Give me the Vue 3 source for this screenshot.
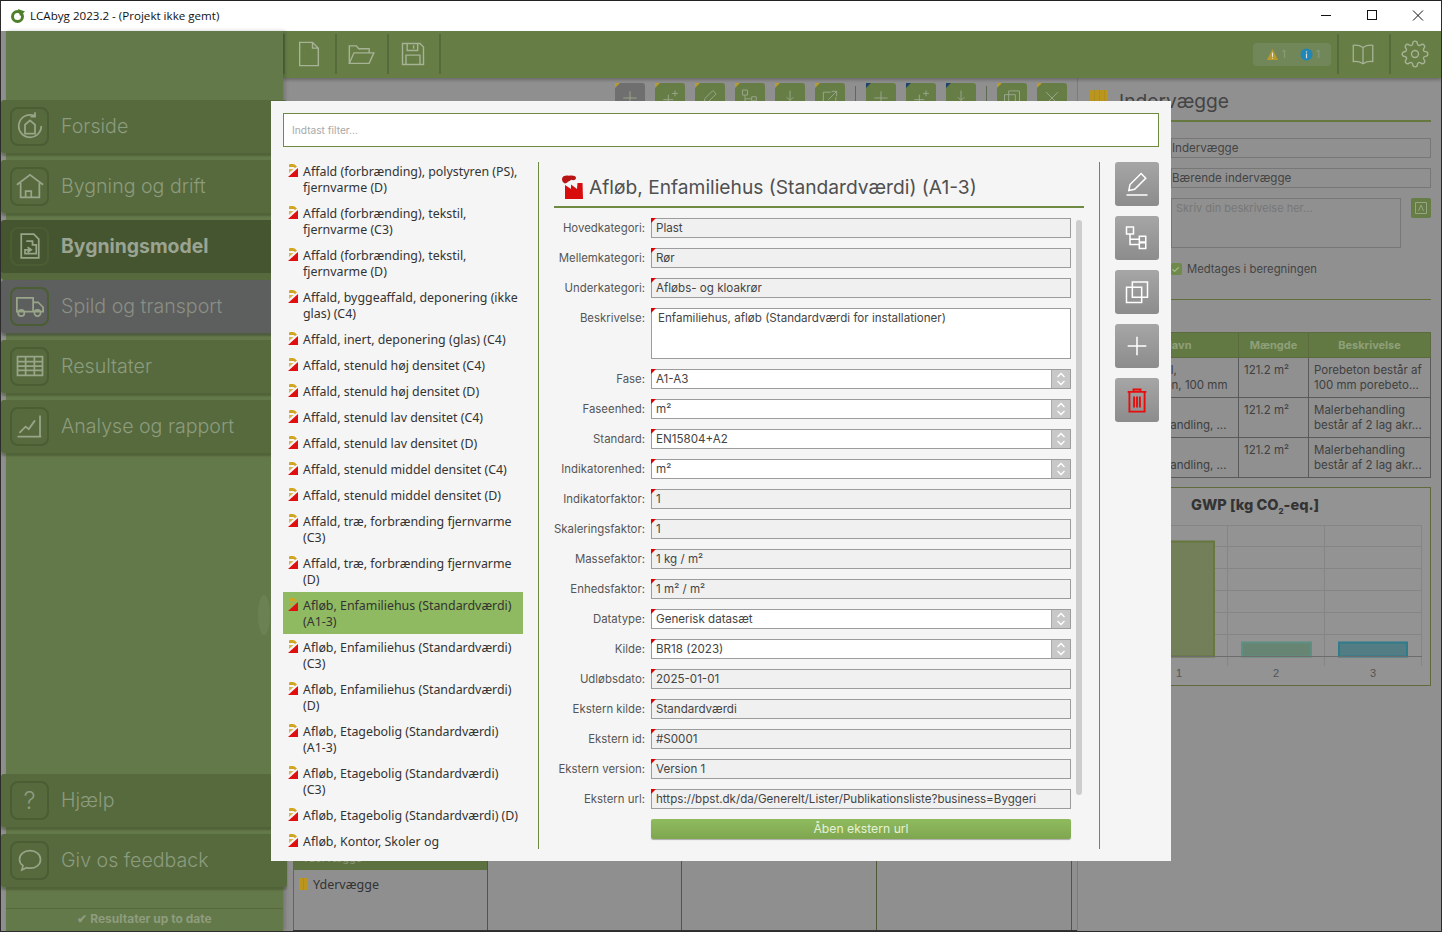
<template>
  <div class="window">
    <header class="titlebar">
      <svg class="logo" viewBox="0 0 16 16" width="16" height="16">
        <circle cx="7.5" cy="8.500" r="5" fill="none" stroke="#4f7f2d" stroke-width="3" />
        <path d="M8 1l7 2.500L10 8z" fill="#4f7f2d" />
        <path d="M7.500 6.500a2 2 0 1 0 2 2" fill="none" stroke="#fff" stroke-width=".8" />
      </svg>
      <span class="app-title">LCAbyg 2023.2 - (Projekt ikke gemt)</span>
      <div class="win-controls">
        <svg viewBox="0 0 46 30" width="46" height="30"><path d="M18 14.500h10" stroke="#111" fill="none" /></svg>
        <svg viewBox="0 0 46 30" width="46" height="30"><rect x="18.500" y="9.500" width="9" height="9" stroke="#111" fill="none" /></svg>
        <svg viewBox="0 0 46 30" width="46" height="30"><path d="M18 9.500l10 10M28 9.500l-10 10" stroke="#111" fill="none" /></svg>
      </div>
    </header>

    <div class="shell">
      <aside class="sidebar">
        <nav class="nav">
          <a v-for="item in navTop" :key="item.label" class="nav-item" :class="item.cls">
            <span class="nav-icon">
              <svg viewBox="0 0 24 24" width="30" height="30"><path :d="icons[item.icon]" /></svg>
            </span>
            {{ item.label }}
          </a>
        </nav>
        <div class="grip"></div>
        <nav class="nav nav-bottom">
          <a class="nav-item">
            <span class="nav-icon nav-q">?</span>
            Hjælp
          </a>
          <a class="nav-item">
            <span class="nav-icon">
              <svg viewBox="0 0 24 24" width="28" height="28"><path :d="icons.bubble" /></svg>
            </span>
            Giv os feedback
          </a>
        </nav>
        <div class="status">✔ Resultater up to date</div>
      </aside>

      <main class="main">
        <div class="topbar">
          <button v-for="t in ['file', 'folder', 'save']" :key="t" class="top-btn">
            <svg viewBox="0 0 24 24" width="28" height="28"><path :d="icons[t]" /></svg>
          </button>
          <div class="notices">
            <svg viewBox="0 0 14 14" width="13" height="13"><path d="M7 1l6 12H1z" fill="#b89a2c" /><path d="M7 5v4.500M7 10.500v1" stroke="#eee" /></svg>
            <span>1</span>
            <svg class="info" viewBox="0 0 14 14" width="13" height="13"><circle cx="7" cy="7" r="6.500" fill="#1f86b5" /><path d="M7 6v5M7 3.500v1.400" stroke="#ddd" stroke-width="1.300" /></svg>
            <span>1</span>
          </div>
          <button class="top-btn top-sep">
            <svg viewBox="0 0 24 24" width="26" height="26"><path :d="icons.book" /></svg>
          </button>
          <button class="top-btn top-sep">
            <svg viewBox="0 0 24 24" width="28" height="28"><path :d="icons.gear" /></svg>
          </button>
        </div>

        <div class="work">
          <section class="center">
            <div class="toolbar">
              <template v-for="(group, g) in toolGroups" :key="g">
                <span v-if="g > 0" class="tool-sep"></span>
                <button v-for="(t, i) in group.items" :key="i" class="tool" :class="[group.cls, { gray: g === 0 && i === 0 }]">
                  <svg viewBox="0 0 24 24" width="20" height="20"><path :d="icons[t]" /></svg>
                </button>
              </template>
            </div>
            <div class="board">
              <div class="col first">
                <div class="col-head">Ydervægge</div>
                <div class="col-row"><span class="wall-icon"></span>Ydervægge</div>
              </div>
              <div class="col"></div>
              <div class="col"></div>
              <div class="col"></div>
            </div>
          </section>

          <section class="panel">
            <div class="panel-title"><span class="wall-icon big"></span>Indervægge</div>
            <div class="p-input">Indervægge</div>
            <div class="p-input">Bærende indervægge</div>
            <div class="p-desc">
              <div class="p-area">Skriv din beskrivelse her...</div>
              <span class="p-expand"><svg viewBox="0 0 14 14" width="14" height="14"><path d="M1.500 1.500h11v11h-11zM4.500 10L7 4l2.500 6" fill="none" stroke="#98a584" /></svg></span>
            </div>
            <div class="p-check"><span class="check">✓</span>Medtages i beregningen</div>
            <div class="p-line"></div>
            <table class="p-table">
              <colgroup><col class="c1" /><col class="c2" /><col class="c3" /></colgroup>
              <thead><tr><th class="name-head">Navn</th><th>Mængde</th><th>Beskrivelse</th></tr></thead>
              <tbody>
                <tr v-for="r in tableRows" :key="r.id">
                  <td class="name-cell">{{ r.name[0] }}<br />{{ r.name[1] }}</td>
                  <td>121.2 m²</td>
                  <td>{{ r.desc[0] }}<br />{{ r.desc[1] }}</td>
                </tr>
              </tbody>
            </table>
            <div class="chart">
              <div class="chart-title">GWP [kg CO<sub>2</sub>-eq.]</div>
              <svg class="chart-svg" viewBox="0 0 340 160" width="340" height="160">
                <g stroke="#858585" fill="none">
                  <path v-for="y in [0.5, 21.5, 43.5, 65.5, 87.5, 109.5]" :key="y" :d="`M40 ${y}H331`" />
                  <path v-for="x in [136.5, 233.5, 330.5]" :key="x" :d="`M${x} 0V141`" />
                </g>
                <rect x="40" y="16.500" width="83" height="115" fill="#727f58" stroke="#67773f" stroke-width="2" />
                <rect x="151" y="117.500" width="69" height="14" fill="#688472" stroke="#5c9082" stroke-width="2" />
                <rect x="248" y="117.500" width="68" height="14" fill="#527d84" stroke="#2f7c8b" stroke-width="2" />
                <path d="M40 131.500H331" stroke="#6d6d6d" />
                <text x="85" y="152" class="tick">1</text>
                <text x="182" y="152" class="tick">2</text>
                <text x="279" y="152" class="tick">3</text>
              </svg>
            </div>
          </section>
        </div>
      </main>
    </div>

    <div class="modal">
      <input class="filter" type="text" placeholder="Indtast filter..." />
      <div class="modal-body">
        <ul class="list">
          <li v-for="(name, i) in products" :key="i" class="list-item" :class="{ selected: i === selected }">
            <svg class="prod-icon" viewBox="0 0 10 13" width="10" height="13">
              <path d="M0 13L10 4v9z" fill="#e01010" />
              <path d="M1 0.500C3 -.2 6 0 7.500 1.200L9 2.500 7 4 5.500 3H1z" fill="#d2a520" />
              <path d="M1 5h4.500L1 9z" fill="#d2a520" opacity=".8" />
            </svg>
            <span class="item-text">{{ name }}</span>
          </li>
        </ul>

        <div class="vline"></div>

        <div class="detail">
          <h2 class="detail-title">
            <svg viewBox="0 0 21 24" width="21" height="24">
              <path d="M3 24V10l6 4V9.500l6 4.500 .5-6h5L21 24z" fill="#d80c0c" />
              <path d="M0 4C0 1 4 0 7 .8c3-.8 7 0 7 2 0 2-2 3-5 2-1 2-3 1-4 3L3 8.500C1 8 0 6 0 4z" fill="#b81414" />
            </svg>
            Afløb, Enfamiliehus (Standardværdi) (A1-3)
          </h2>
          <div class="form-wrap">
            <div class="form">
              <div v-for="f in fields" :key="f.label" class="form-row">
                <label class="form-label">{{ f.label }}:</label>
                <div class="field" :class="{ white: f.select || f.area, area: f.area }">
                  <span class="field-text">{{ f.value }}</span>
                  <span v-if="f.select" class="stepper">
                    <svg viewBox="0 0 18 18" width="18" height="18"><path d="M5.500 7L9 3.500 12.500 7M5.500 11L9 14.500l3.500-3.500" fill="none" stroke="#fff" stroke-width="1.300" /></svg>
                  </span>
                </div>
              </div>
              <div class="form-row">
                <span class="form-label"></span>
                <button class="open-url">Åben ekstern url</button>
              </div>
            </div>
            <div class="scrollbar"></div>
          </div>
        </div>

        <div class="vline"></div>

        <div class="actions">
          <button v-for="a in actions" :key="a" class="action" :class="{ danger: a === 'trash' }">
            <svg viewBox="0 0 24 24" width="28" height="28"><path :d="icons[a]" /></svg>
          </button>
        </div>
      </div>
    </div>
  </div>
</template>

<script setup>
const selected = 13

const icons = {
  home: 'M21 12a9 9 0 1 1-5-8M16 1v3.500h-3.600M8 18v-7l4-3.500 4 3.500v7z',
  house: 'M1.500 11L12 3l10.500 8M4.500 9.500V21h15V9.500M8.500 21v-5h4.500v5',
  doc: 'M5 2.500h10l4 4v15H5zM9 8h5v3h3v7H8v-3h5M10 13l3 2-3 2',
  truck: 'M1.500 5.500h13v11h-13zM14.500 9h4l4 4v3.500h-8M7.500 17.500a2.500 2.500 0 1 1-5 0 2.500 2.500 0 0 1 5 0zM20.500 17.500a2.500 2.500 0 1 1-5 0 2.500 2.500 0 0 1 5 0z',
  table: 'M2 4.500h20v15H2zM2 8.500h20M2 12h20M2 15.500h20M8.500 4.500v15M15.500 4.500v15',
  chart: 'M2 20.500h19M20 3.500v17M3.500 17.500l5-5 2.500 2 5-7',
  bubble: 'M12 4c5 0 9 3 9 7.500S17 19 12 19c-1 0-2 0-3-.4L5 20.500l1-3.700C4 15.400 3 13.500 3 11.500 3 7 7 4 12 4z',
  file: 'M4 2h11l5 5v15H4zM15 2v5h5',
  folder: 'M2 20V5h6l2 2.500h9V11M2 20l4-9h17l-4 9z',
  save: 'M3 3h15l3 3v15H3zM7 3v6h9V3M12.500 4.500v3M6 21v-8h12v8',
  book: 'M12 6C9 4 6 3.500 3 4v15c3-.5 6 0 9 2 3-2 6-2.500 9-2V4c-3-.500-6 0-9 2zM12 6v15',
  gear: 'M12 15a3 3 0 1 0 0-6 3 3 0 0 0 0 6zM19.400 15a1.650 1.650 0 0 0 .33 1.820l.06.06a2 2 0 0 1 0 2.830 2 2 0 0 1-2.830 0l-.06-.06a1.650 1.650 0 0 0-1.820-.33 1.650 1.650 0 0 0-1 1.510V21a2 2 0 0 1-2 2 2 2 0 0 1-2-2v-.09A1.650 1.650 0 0 0 9 19.400a1.650 1.650 0 0 0-1.820.33l-.06.06a2 2 0 0 1-2.830 0 2 2 0 0 1 0-2.830l.06-.06a1.650 1.650 0 0 0 .33-1.820 1.650 1.650 0 0 0-1.510-1H3a2 2 0 0 1-2-2 2 2 0 0 1 2-2h.09A1.650 1.650 0 0 0 4.600 9a1.650 1.650 0 0 0-.33-1.820l-.06-.06a2 2 0 0 1 0-2.830 2 2 0 0 1 2.830 0l.06.06a1.650 1.650 0 0 0 1.820.33H9a1.650 1.650 0 0 0 1-1.510V3a2 2 0 0 1 2-2 2 2 0 0 1 2 2v.09a1.650 1.650 0 0 0 1 1.510 1.650 1.650 0 0 0 1.820-.33l.06-.06a2 2 0 0 1 2.830 0 2 2 0 0 1 0 2.830l-.06.06a1.650 1.650 0 0 0-.33 1.820V9a1.650 1.650 0 0 0 1.510 1H21a2 2 0 0 1 2 2 2 2 0 0 1-2 2h-.09a1.650 1.650 0 0 0-1.510 1z',
  plus: 'M12 4v16M4 12h16',
  plusplus: 'M10 8v12M4 14h12M18 3v7M14.500 6.500h7',
  pencil: 'M5 17.500l1-5L15.500 3l4 4L10 16.500zM3 21.500h18',
  tree: 'M3 2.500h6v6H3zM6 8.500v9h8M6 13h8M14 10.500h5.500v5H14zM14 16h5.500v5H14z',
  down: 'M12 3v12M8 11l4 4 4-4M3 19v2h18v-2',
  out: 'M13 5H4v15h15v-9M10 14L20 4M14 4h6v6',
  copy: 'M3 8h13v13H3zM8 3.500h13v13H8z',
  cross: 'M5 5l14 14M19 5L5 19',
  trash: 'M4 5h16M9 5V3h6v2M5.500 5h13v17h-13zM9.500 9v9.500M12 9v9.500M14.500 9v9.500'
}

const navTop = [
  { label: 'Forside', icon: 'home' },
  { label: 'Bygning og drift', icon: 'house' },
  { label: 'Bygningsmodel', icon: 'doc', cls: 'active' },
  { label: 'Spild og transport', icon: 'truck', cls: 'muted' },
  { label: 'Resultater', icon: 'table' },
  { label: 'Analyse og rapport', icon: 'chart' }
]

const toolGroups = [
  { cls: 'corner-y', items: ['plus', 'plusplus', 'pencil', 'tree', 'down', 'out'] },
  { cls: 'corner-b', items: ['plus', 'plusplus', 'down'] },
  { cls: 'corner-y', items: ['copy', 'cross'] }
]

const tableRows = [
  { id: 1, name: ['Bærende panel,', 'Væg, porebeton, 100 mm'], desc: ['Porebeton består af', '100 mm porebeto...'] },
  { id: 2, name: ['Overfladelag,', 'Væg malerbehandling, ...'], desc: ['Malerbehandling', 'består af 2 lag akr...'] },
  { id: 3, name: ['Overfladelag,', 'Væg malerbehandling, ...'], desc: ['Malerbehandling', 'består af 2 lag akr...'] }
]

const products = [
  'Affald (forbrænding), polystyren (PS), fjernvarme (D)',
  'Affald (forbrænding), tekstil, fjernvarme (C3)',
  'Affald (forbrænding), tekstil, fjernvarme (D)',
  'Affald, byggeaffald, deponering (ikke glas) (C4)',
  'Affald, inert, deponering (glas) (C4)',
  'Affald, stenuld høj densitet (C4)',
  'Affald, stenuld høj densitet (D)',
  'Affald, stenuld lav densitet (C4)',
  'Affald, stenuld lav densitet (D)',
  'Affald, stenuld middel densitet (C4)',
  'Affald, stenuld middel densitet (D)',
  'Affald, træ, forbrænding fjernvarme (C3)',
  'Affald, træ, forbrænding fjernvarme (D)',
  'Afløb, Enfamiliehus (Standardværdi) (A1-3)',
  'Afløb, Enfamiliehus (Standardværdi) (C3)',
  'Afløb, Enfamiliehus (Standardværdi) (D)',
  'Afløb, Etagebolig (Standardværdi) (A1-3)',
  'Afløb, Etagebolig (Standardværdi) (C3)',
  'Afløb, Etagebolig (Standardværdi) (D)',
  'Afløb, Kontor, Skoler og Daginstitutioner'
]

const fields = [
  { label: 'Hovedkategori', value: 'Plast' },
  { label: 'Mellemkategori', value: 'Rør' },
  { label: 'Underkategori', value: 'Afløbs- og kloakrør' },
  { label: 'Beskrivelse', value: 'Enfamiliehus, afløb (Standardværdi for installationer)', area: true },
  { label: 'Fase', value: 'A1-A3', select: true },
  { label: 'Faseenhed', value: 'm²', select: true },
  { label: 'Standard', value: 'EN15804+A2', select: true },
  { label: 'Indikatorenhed', value: 'm²', select: true },
  { label: 'Indikatorfaktor', value: '1' },
  { label: 'Skaleringsfaktor', value: '1' },
  { label: 'Massefaktor', value: '1 kg / m²' },
  { label: 'Enhedsfaktor', value: '1 m² / m²' },
  { label: 'Datatype', value: 'Generisk datasæt', select: true },
  { label: 'Kilde', value: 'BR18 (2023)', select: true },
  { label: 'Udløbsdato', value: '2025-01-01' },
  { label: 'Ekstern kilde', value: 'Standardværdi' },
  { label: 'Ekstern id', value: '#S0001' },
  { label: 'Ekstern version', value: 'Version 1' },
  { label: 'Ekstern url', value: 'https://bpst.dk/da/Generelt/Lister/Publikationsliste?business=Byggeri' }
]

const actions = ['pencil', 'tree', 'copy', 'plus', 'trash']
</script>

<style>
html,
body {
  margin: 0;
  overflow: hidden;
}
</style>

<style scoped>
.window {
  position: relative;
  display: flex;
  flex-direction: column;
  width: 1442px;
  height: 932px;
  box-sizing: border-box;
  border: 1px solid #2c2c2c;
  border-top-color: #222;
  background: #8f8f8f;
  overflow: hidden;
  font-family: Inter, "Noto Sans", sans-serif;
  color: #444;
}

.titlebar {
  display: flex;
  align-items: center;
  height: 30px;
  flex: none;
  background: #fff;
  padding-left: 9px;
}

.logo {
  margin-right: 4px;
}

.app-title {
  padding-bottom: 1px;
  font-family: "Open Sans", "Noto Sans", sans-serif;
  font-size: 11.6px;
  color: #111;
}

.win-controls {
  display: flex;
  margin-left: auto;
}

.shell {
  display: flex;
  flex: 1;
  min-height: 0;
}

.sidebar {
  position: relative;
  z-index: 1;
  display: flex;
  flex-direction: column;
  flex: none;
  width: 277px;
  margin-left: 5px;
  padding-top: 69px;
  box-sizing: border-box;
  background: #64794a;
  box-shadow: 2px 0 4px rgba(0, 0, 0, 0.2);
}

.nav {
  display: flex;
  flex-direction: column;
  gap: 7px;
  margin: 0 -4px 0 -5px;
}

.nav-bottom {
  margin-top: auto;
}

.nav-item {
  display: flex;
  align-items: center;
  gap: 12px;
  height: 53px;
  padding: 0 0 1px 9px;
  box-sizing: border-box;
  background: #566a3d;
  border-radius: 3px;
  box-shadow: 0 3px 2px rgba(50, 64, 30, 0.4);
  font-size: 19.6px;
  font-weight: 300;
  color: #8d9b7e;
}

.nav-item.active {
  background: #445530;
  font-weight: 700;
  color: #9ba392;
  font-size: 19.4px;
  box-shadow: 0 7px 0 #566a3d;
}

.nav-item.muted {
  background: #5d5e5e;
  box-shadow: 0 3px 2px rgba(50, 50, 50, 0.4);
  color: #8a8f84;
}

.nav-icon {
  display: flex;
  align-items: center;
  justify-content: center;
  width: 35px;
  height: 35px;
  flex: none;
  border: 2px solid #4b5d33;
  border-radius: 8px;
}

.nav-icon svg {
  fill: none;
  stroke: #98a588;
  stroke-width: 1.4;
}

.nav-q {
  font-size: 24px;
  font-weight: 300;
}

.grip {
  position: absolute;
  right: 13px;
  top: 564px;
  width: 12px;
  height: 40px;
  border-radius: 50%;
  background: #6c8153;
}

.status {
  margin: 21px 0 0;
  height: 23px;
  line-height: 20px;
  border-top: 1px solid #566a3d;
  box-sizing: border-box;
  text-align: center;
  font-size: 12px;
  font-weight: 700;
  color: #8e9c7e;
}

.main {
  display: flex;
  flex-direction: column;
  flex: 1;
  min-width: 0;
}

.topbar {
  position: relative;
  display: flex;
  align-items: stretch;
  flex: none;
  height: 47px;
  padding: 3px 0 4px;
  box-sizing: border-box;
  background: #667d46;
  box-shadow: 0 2px 3px rgba(0, 0, 0, 0.25);
}

.top-btn {
  display: flex;
  align-items: center;
  justify-content: center;
  width: 52px;
  padding: 0 2px 0 0;
  background: none;
  border: 0;
  border-left: 2px solid #566a3c;
}

.top-btn:nth-child(3) {
  width: 54px;
  border-right: 2px solid #566a3c;
}

.top-btn svg {
  fill: none;
  stroke: #a6b394;
  stroke-width: 1.2;
}

.notices {
  display: flex;
  align-items: center;
  gap: 3px;
  align-self: center;
  height: 23px;
  margin: 0 6px 0 auto;
  padding: 0 11px 0 13px;
  border-radius: 4px;
  background: #71875a;
  font-size: 10px;
  color: #8fa07c;
}

.notices .info {
  margin-left: 11px;
}

.work {
  display: flex;
  flex: 1;
  min-height: 0;
}

.center {
  display: flex;
  flex-direction: column;
  flex: none;
  width: 794px;
}

.toolbar {
  display: flex;
  gap: 10px;
  padding: 5px 0 0 332px;
}

.tool {
  position: relative;
  display: flex;
  align-items: center;
  justify-content: center;
  width: 30px;
  height: 30px;
  padding: 0;
  border: 0;
  border-radius: 3px;
  background: #667d46;
}

.tool.gray {
  background: #6f6f6f;
}

.tool::before {
  content: "";
  position: absolute;
  top: 0;
  left: 0;
  border-style: solid;
  border-width: 5px 5px 0 0;
  border-color: #b99a2e transparent transparent transparent;
}

.corner-b::before {
  border-color: #1f4468 transparent transparent transparent;
}

.tool svg {
  fill: none;
  stroke: #98a58a;
  stroke-width: 1.2;
}

.tool-sep {
  width: 1px;
  height: 26px;
  margin-top: 3px;
  background: #5e6b50;
}

.board {
  display: grid;
  grid-template-columns: 195px 194px 195px 195px;
  height: 90px;
  margin: auto 0 0 10px;
  border-bottom: 1px solid #333;
}

.col {
  border-right: 1px solid #4d5a38;
}

.col.first {
  border-left: 1px solid #5d6f3d;
}

.col-head {
  height: 30px;
  padding: 8px 0 0 8px;
  box-sizing: border-box;
  line-height: 20px;
  background: #5d7140;
  font-size: 11px;
  color: #8d9a7e;
}

.col-row {
  display: flex;
  align-items: center;
  gap: 5px;
  height: 28px;
  padding-left: 5px;
  font-family: "Noto Sans", sans-serif;
  font-size: 12.5px;
  color: #333;
}

.wall-icon {
  display: inline-block;
  width: 9px;
  height: 12px;
  background: repeating-linear-gradient(90deg, #bb961f 0 4px, #b08c1c 4px 5px);
  border-radius: 1px;
}

.wall-icon.big {
  width: 18px;
  height: 18px;
  margin: -5px 11px 0 0;
}

.panel {
  flex: 1;
  padding: 0 11px 0 12px;
  border-left: 1px solid #7c7c7c;
  background: #909090;
  font-size: 11.6px;
}

.panel-title {
  display: flex;
  align-items: center;
  height: 44px;
  padding-top: 4px;
  box-sizing: border-box;
  border-bottom: 2px solid #66773f;
  font-size: 19.200px;
  color: #444;
}

.p-input {
  width: 260px;
  height: 20px;
  margin: 16px 0 -6px auto;
  box-sizing: border-box;
  border: 1px solid #777;
  line-height: 18px;
}

.p-desc {
  display: flex;
  gap: 10px;
  justify-content: flex-end;
  margin-top: 16px;
}

.p-area {
  width: 230px;
  height: 50px;
  padding: 2px 4px;
  box-sizing: border-box;
  border: 1px solid #777;
  font-size: 11px;
  color: #777;
}

.p-expand {
  display: flex;
  align-items: center;
  justify-content: center;
  width: 20px;
  height: 20px;
  border-radius: 2px;
  background: #667d46;
}

.p-check {
  display: flex;
  align-items: center;
  gap: 5px;
  height: 12px;
  margin: 15px 0 0 81px;
  font-size: 11.300px;
  color: #444;
}

.check {
  width: 11px;
  height: 12px;
  line-height: 12px;
  border-radius: 2px;
  background: #6f8a4a;
  font-size: 10px;
  color: #b7c5a4;
}

.p-line {
  height: 1px;
  margin: 24px 0 32px;
  background: #5f6f3a;
}

.p-table {
  width: 341px;
  border-collapse: collapse;
  table-layout: fixed;
  font-size: 11.500px;
  color: #3f3f3f;
}

.c1 {
  width: 148px;
}

.c2 {
  width: 70px;
}

.p-table th {
  height: 24px;
  padding: 0;
  border: 1px solid #5c6b3f;
  background: #627944;
  font-size: 11px;
  color: #8fa079;
}

.p-table th.name-head {
  padding-left: 26px;
}

.p-table td {
  height: 34px;
  padding: 5px 0 0 5px;
  border: 1px solid #5a5a5a;
  vertical-align: top;
  line-height: 15px;
  white-space: nowrap;
  overflow: hidden;
}

.p-table td.name-cell {
  padding-left: 0;
}

.chart {
  width: 341px;
  height: 199px;
  margin-top: 9px;
  box-sizing: border-box;
  border: 1px solid #5f6b3c;
  background: #939393;
}

.chart-title {
  height: 37px;
  padding: 8px 0 0 100px;
  box-sizing: border-box;
  font-size: 14.500px;
  font-weight: 800;
  color: #333;
}

.chart-title sub {
  font-size: 8px;
  line-height: 0;
}

.chart-svg {
  display: block;
}

.tick {
  font-family: "Liberation Sans", sans-serif;
  font-size: 11px;
  fill: #555;
}

.modal {
  position: absolute;
  z-index: 2;
  left: 270px;
  top: 100px;
  width: 900px;
  height: 760px;
  padding: 12px;
  box-sizing: border-box;
  background: #f5f5f5;
}

.filter {
  display: block;
  width: 100%;
  height: 34px;
  padding: 0 8px;
  box-sizing: border-box;
  border: 1px solid #6f8a42;
  border-radius: 0;
  outline: none;
  background: #fff;
  font-family: Inter, sans-serif;
  font-size: 10.200px;
}

.filter::placeholder {
  color: #a8a8a8;
}

.modal-body {
  display: flex;
  height: 691px;
  margin-top: 11px;
}

.list {
  flex: none;
  width: 240px;
  margin: 0 15px 0 0;
  padding: 0;
  list-style: none;
  overflow: hidden;
  font-family: "Noto Sans", sans-serif;
  font-size: 12.400px;
  line-height: 16px;
  color: #333;
}

.list-item {
  display: flex;
  gap: 5px;
  padding: 5px 3px 5px 5px;
}

.item-text {
  position: relative;
  top: 1px;
}

.list-item.selected {
  background: #8fba61;
}

.prod-icon {
  flex: none;
  margin-top: 1px;
}

.vline {
  flex: none;
  width: 1px;
  margin-top: 4px;
  background: #6f8a42;
}

.detail {
  flex: none;
  width: 530px;
  margin: 4px 15px 0;
}

.detail-title {
  display: flex;
  align-items: center;
  gap: 6px;
  height: 46px;
  margin: 0 0 10px;
  padding: 8px 0 2px 8px;
  box-sizing: border-box;
  border-bottom: 2px solid #6f8a42;
  font-size: 19.200px;
  font-weight: 400;
  color: #505050;
}

.form-wrap {
  display: flex;
  gap: 5px;
}

.form {
  display: flex;
  flex-direction: column;
  gap: 10px;
  width: 517px;
}

.form-row {
  display: flex;
  gap: 6px;
}

.form-label {
  flex: none;
  width: 91px;
  text-align: right;
  line-height: 20px;
  font-size: 11.400px;
  color: #555;
  white-space: nowrap;
}

.field {
  position: relative;
  display: flex;
  width: 420px;
  height: 20px;
  box-sizing: border-box;
  border: 1px solid #9c9c9c;
  background: #f0f0f0;
  font-size: 11.600px;
  line-height: 18px;
  color: #444;
}

.field::before {
  content: "";
  position: absolute;
  left: -1px;
  top: -1px;
  border-style: solid;
  border-width: 5px 5px 0 0;
  border-color: #e00000 transparent transparent transparent;
}

.field.white {
  background: #fff;
}

.field.area {
  height: 51px;
}

.field-text {
  flex: 1;
  padding-left: 4px;
}

.area .field-text {
  padding-left: 6px;
}

.stepper {
  flex: none;
  width: 18px;
  border-left: 1px solid #aaa;
  background: #c8c8c8;
}

.stepper svg {
  display: block;
}

.open-url {
  width: 420px;
  height: 20px;
  padding: 0 0 2px;
  border: 0;
  border-radius: 2px;
  background: linear-gradient(#8fbb5e, #7fa650);
  box-shadow: 0 1px 1px rgba(0, 0, 0, 0.3);
  font-family: Inter, sans-serif;
  font-size: 12.200px;
  color: #e6f2d8;
}

.scrollbar {
  width: 6px;
  height: 575px;
  margin-top: 2px;
  border-radius: 3px;
  background: #cdcdcd;
}

.actions {
  display: flex;
  flex-direction: column;
  gap: 10px;
  margin: 4px 0 0 15px;
}

.action {
  display: flex;
  align-items: center;
  justify-content: center;
  width: 44px;
  height: 44px;
  padding: 0;
  border: 0;
  border-radius: 3px;
  background: linear-gradient(#a6a6a6, #8c8c8c);
}

.action svg {
  fill: none;
  stroke: #fff;
  stroke-width: 1.3;
}

.action.danger svg {
  stroke: #e80c0c;
  stroke-width: 1.6;
}
</style>
